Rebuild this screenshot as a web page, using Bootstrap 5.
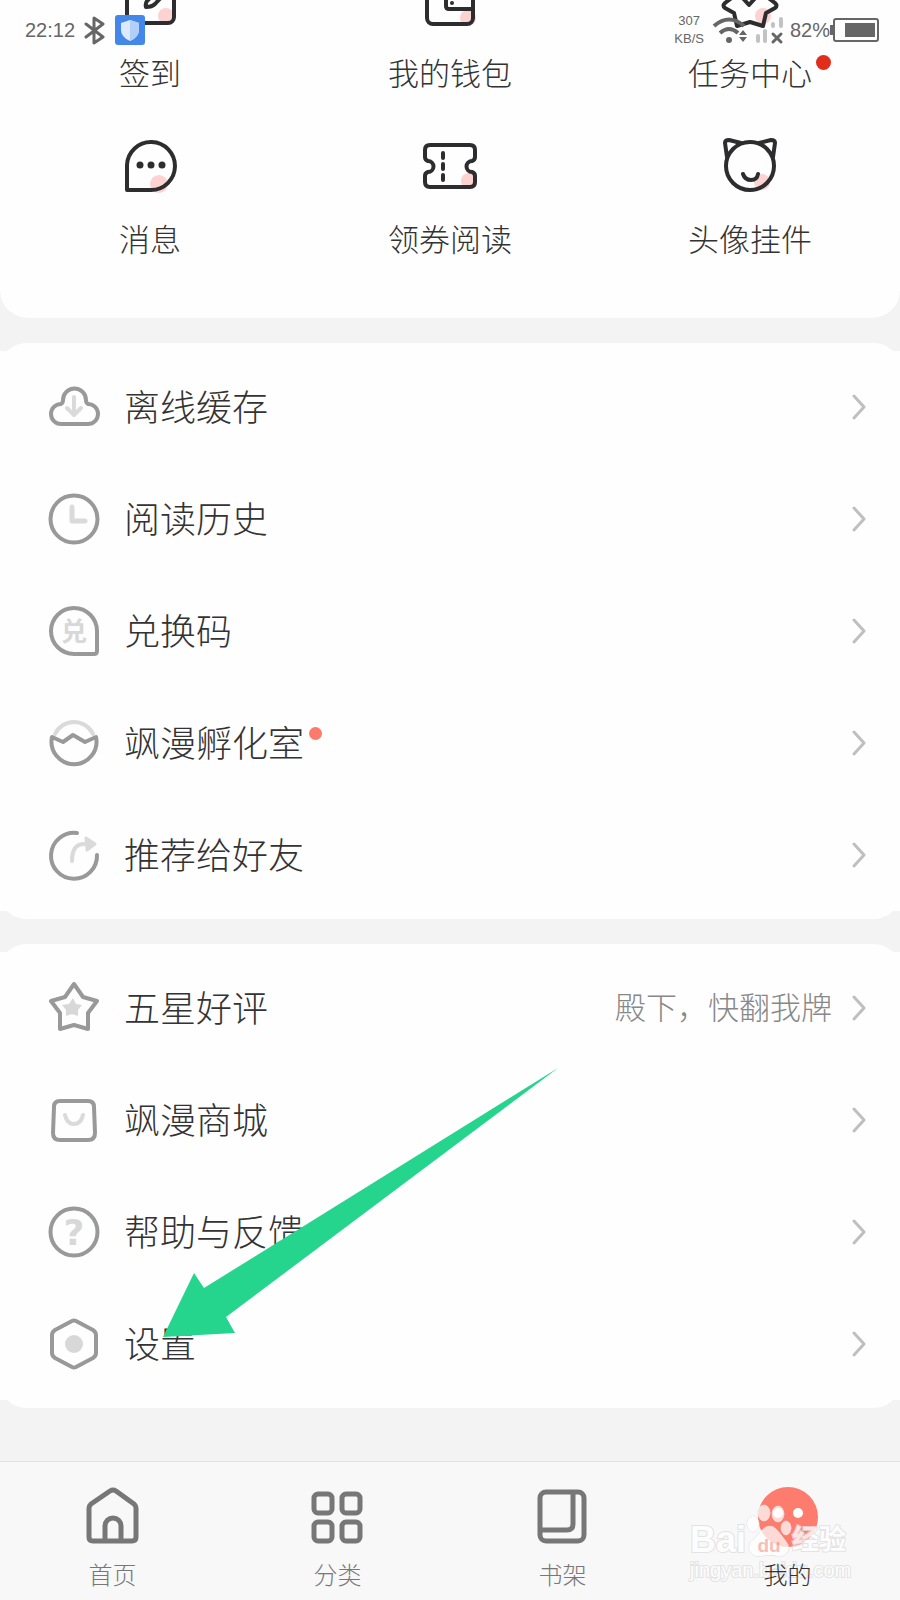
<!DOCTYPE html>
<html lang="zh-CN">
<head>
<meta charset="utf-8">
<meta name="viewport" content="width=device-width, initial-scale=1">
<title>我的</title>
<link href="https://cdn.jsdelivr.net/npm/bootstrap@5.3.0/dist/css/bootstrap.min.css" rel="stylesheet">
<script src="https://cdn.jsdelivr.net/npm/bootstrap@5.3.0/dist/js/bootstrap.bundle.min.js"></script>
<style>
  body { background: #f3f3f3; color: #333; font-family: "Noto Sans CJK SC", sans-serif; font-weight: 300; }
  a { color: inherit; text-decoration: none; }
  svg { flex: none; display: block; fill: none; stroke-linecap: round; stroke-linejoin: round; }

  /* status bar */
  .status { height: 60px; padding: 0 20px 0 25px; color: #666; font-family: "Liberation Sans", sans-serif; font-size: 20px; z-index: 3; }
  .speed { font-size: 13px; line-height: 18px; margin-right: 8px; }

  /* shortcut grid */
  .shortcuts { background: #fefefe; border-radius: 0 0 28px 28px; padding-bottom: 60px; row-gap: 40px; }
  .shortcut { font-size: 31px; line-height: 40px; gap: 22px; }
  .scrolled { height: 30px; overflow: hidden; }
  .ink { stroke: #2d2d2f; stroke-width: 4; }
  .blush { fill: #fcd3d0; stroke: none; }
  .dot { position: absolute; border-radius: 50%; }
  .dot-red { width: 15px; height: 15px; right: -19px; top: 3px; background: #e32d1c; }
  .dot-coral { width: 13px; height: 13px; right: -18px; top: 10px; background: #fd7a6c; }

  /* menu panels: rounded caps round a full-width body */
  .panel { background: #fefefe; border-radius: 26px; padding: 8px 0; margin-top: 25px; }
  .menu-row { background: #fefefe; height: 112px; padding: 0 34px 0 46px; font-size: 36px; line-height: 48px; }
  .menu-row > span { padding-bottom: 4px; }
  .menu-row .menu-icon { stroke: #999; stroke-width: 4; margin-right: 22px; }
  .pale { stroke: #dadada; }
  .pale-fill { fill: #d8d8d8; stroke: none; }
  .hint { color: #888; font-size: 31px; margin-right: 20px; }
  .chevron { stroke: #bfbfbf; stroke-width: 3; }
  .pointer { position: absolute; left: 163px; top: 124px; pointer-events: none; z-index: 2; }

  /* tab bar */
  .tabs { background: #f8f8f8; border-top: 1px solid #e2e2e2; padding: 23px 0 11px; }
  .tab { color: #777; font-size: 24px; line-height: 30px; gap: 10px; }
  .tab svg { stroke: #777; stroke-width: 5; }
  .tab.active { color: #333; }
  .tab.active span { position: relative; z-index: 2; }
  .stamp { position: absolute; right: 50px; top: 42px; width: 160px; color: #fff; opacity: .8; font-family: "Liberation Sans", "Noto Sans CJK SC", sans-serif; font-weight: 700; -webkit-text-stroke: 2px #dedede; paint-order: stroke fill; pointer-events: none; }
  .stamp-name { font-size: 36px; line-height: 36px; }
  .stamp-cn { font-size: 27px; line-height: 36px; }
  .stamp-url { font-size: 20px; line-height: 24px; font-weight: 400; }
  .paw { fill: #fff; fill-opacity: .9; stroke: #d8d8d8; stroke-width: 1; }
  .paw text { fill: #fca399; stroke: none; -webkit-text-stroke: 0; }
</style>
</head>
<body>
<div class="d-flex flex-column min-vh-100 position-relative">

  <header class="status position-absolute top-0 start-0 w-100 d-flex align-items-center">
    <span>22:12</span>
    <svg class="ms-2 me-2" width="24" height="30" stroke="#666" stroke-width="3"><path d="M3 9l17 13-9 6V3l9 6L3 22"/></svg>
    <svg width="30" height="30"><rect width="30" height="30" rx="3" fill="#4387e8"/><path d="M15 5l9 3v7q0 7-9 11-9-4-9-11V8z" fill="#dce9fc"/><path d="M15 5l9 3v7q0 7-9 11z" fill="#b3cff8"/></svg>
    <span class="speed ms-auto text-center">307<br>KB/S</span>
    <svg class="me-1" width="74" height="30" stroke="#666">
      <g stroke-width="4" stroke-linecap="butt"><path d="M2 11q15-13 30 0M8 18q9-8 18 0"/></g>
      <circle cx="17" cy="25" r="3" fill="#666" stroke="none"/>
      <path d="M31 15l4 5h-8zM31 27l4-5h-8z" fill="#666" stroke="none"/>
      <g stroke="#c2c2c2" stroke-width="4"><path d="M46 21v5M53 16v10M61 9v2M69 4v7"/></g>
      <path d="M61 19l8 8M69 19l-8 8" stroke-width="3"/>
    </svg>
    <span>82%</span>
    <svg width="50" height="26"><path d="M0 8h3v10H0z" fill="#666"/><rect x="4" y="2" width="44" height="22" rx="2" stroke="#666" stroke-width="2"/><path d="M15 6h30v14H15z" fill="#666"/></svg>
  </header>

  <main>
    <nav class="shortcuts row g-0 text-center">
      <a href="#" class="shortcut col-4 d-flex flex-column align-items-center">
        <span class="scrolled d-flex align-items-end"><svg class="ink" width="64" height="64" viewBox="0 0 64 64"><circle class="blush" cx="48" cy="50" r="8"/><rect x="9" y="8" width="47" height="49" rx="6"/><path d="M42 22L29 35q-2 3-1 6 6 0 9-3l13-14"/></svg></span>
        <span>签到</span>
      </a>
      <a href="#" class="shortcut col-4 d-flex flex-column align-items-center">
        <span class="scrolled d-flex align-items-end"><svg class="ink" width="64" height="64" viewBox="0 0 64 64"><circle class="blush" cx="50" cy="52" r="8"/><rect x="9" y="10" width="46" height="48" rx="6"/><path d="M55 43H31q-3 0-3-3V30h27"/><circle cx="34" cy="37" r="2" fill="#2d2d2f" stroke="none"/></svg></span>
        <span>我的钱包</span>
      </a>
      <a href="#" class="shortcut col-4 d-flex flex-column align-items-center">
        <span class="scrolled d-flex align-items-end"><svg class="ink" width="64" height="64" viewBox="0 0 64 64"><circle class="blush" cx="45" cy="50" r="8"/><path d="M32 4L40 24 57 37q3 3 0 5l-9 5-3 13-13-4-13 4-3-13-9-5q-3-2 0-5l17-13zM22 29l9 10 9-10"/></svg></span>
        <span class="position-relative">任务中心<i class="dot dot-red"></i></span>
      </a>
      <a href="#" class="shortcut col-4 d-flex flex-column align-items-center">
        <svg class="ink" width="64" height="64" viewBox="0 0 64 64"><circle class="blush" cx="41" cy="52" r="9"/><path d="M9 58V33A24 24 0 1 1 33 58z"/><g fill="#2d2d2f" stroke="none"><circle cx="22" cy="33" r="3.500"/><circle cx="33" cy="33" r="3.500"/><circle cx="44" cy="33" r="3.500"/></g></svg>
        <span>消息</span>
      </a>
      <a href="#" class="shortcut col-4 d-flex flex-column align-items-center">
        <svg class="ink" width="64" height="64" viewBox="0 0 64 64"><circle class="blush" cx="51" cy="49" r="8"/><path d="M12 13h40q5 0 5 5v7q0 3-3 4a5.500 5.500 0 0 0 0 11q3 1 3 4v6q0 5-5 5H12q-5 0-5-5v-6q0-3 3-4a5.500 5.500 0 0 0 0-11q-3-1-3-4v-7q0-5 5-5zM25 21v5M25 32v5M25 43v5"/></svg>
        <span>领券阅读</span>
      </a>
      <a href="#" class="shortcut col-4 d-flex flex-column align-items-center">
        <svg class="ink" width="64" height="64" viewBox="0 0 64 64"><circle class="blush" cx="44" cy="50" r="8"/><circle cx="32" cy="34" r="24"/><path d="M9 25L7 11q0-3 4-3l12 3M55 25l2-14q0-3-4-3l-12 3M25 42q2 6 8 6t7-6"/></svg>
        <span>头像挂件</span>
      </a>
    </nav>

    <section class="panel">
      <a href="#" class="menu-row d-flex align-items-center">
        <svg class="menu-icon" width="56" height="56"><path d="M15 45a10 10 0 0 1 0-20q2-1 2-4a11 11 0 0 1 23 0q0 3 2 4a10 10 0 0 1 0 20z"/><path class="pale" d="M28 18v18M21 29l7 7 7-7"/></svg>
        <span>离线缓存</span>
        <svg class="chevron ms-auto" width="14" height="26"><path d="M2 2l10 11L2 24"/></svg>
      </a>
      <a href="#" class="menu-row d-flex align-items-center">
        <svg class="menu-icon" width="56" height="56"><circle cx="28" cy="28" r="23.500"/><path class="pale" stroke-width="5" d="M26 16v14h13"/></svg>
        <span>阅读历史</span>
        <svg class="chevron ms-auto" width="14" height="26"><path d="M2 2l10 11L2 24"/></svg>
      </a>
      <a href="#" class="menu-row d-flex align-items-center">
        <svg class="menu-icon" width="56" height="56"><path d="M28 5a23 23 0 0 0 0 46h20q3 0 3-3V28A23 23 0 0 0 28 5z"/><text class="pale-fill" x="28" y="38" font-size="26" font-weight="700" text-anchor="middle">兑</text></svg>
        <span>兑换码</span>
        <svg class="chevron ms-auto" width="14" height="26"><path d="M2 2l10 11L2 24"/></svg>
      </a>
      <a href="#" class="menu-row d-flex align-items-center">
        <svg class="menu-icon" width="56" height="56"><path class="pale" d="M9 19a21 21 0 0 1 38 0"/><path d="M6 22l11 5 10-7 12 7 11-5A22.500 22.500 0 1 1 6 22z"/></svg>
        <span class="position-relative">飒漫孵化室<i class="dot dot-coral"></i></span>
        <svg class="chevron ms-auto" width="14" height="26"><path d="M2 2l10 11L2 24"/></svg>
      </a>
      <a href="#" class="menu-row d-flex align-items-center">
        <svg class="menu-icon" width="56" height="56"><path d="M31 6A23 23 0 1 0 51 28"/><path class="pale" d="M26 34q0-17 12-17"/><path class="pale" fill="#dadada" stroke-width="3" d="M40 11l9 6-8 6z"/></svg>
        <span>推荐给好友</span>
        <svg class="chevron ms-auto" width="14" height="26"><path d="M2 2l10 11L2 24"/></svg>
      </a>
    </section>

    <section class="panel position-relative">
      <a href="#" class="menu-row d-flex align-items-center">
        <svg class="menu-icon" width="56" height="56"><path d="M28 4l9 13 14 4-9 12v16l-14-4-14 4V33L5 21l14-4z"/><path class="pale-fill" d="M27 18l3 6 6 1-4 5v6l-6-2-6 2v-6l-4-5 7-1z"/></svg>
        <span>五星好评</span>
        <span class="hint ms-auto">殿下，快翻我牌</span>
        <svg class="chevron" width="14" height="26"><path d="M2 2l10 11L2 24"/></svg>
      </a>
      <a href="#" class="menu-row d-flex align-items-center">
        <svg class="menu-icon" width="56" height="56"><path d="M14 9h28q6 0 6 6l1 26q0 7-7 7H14q-7 0-7-7l1-26q0-6 6-6z"/><path class="pale" d="M19 23q2 9 9 9t9-9"/></svg>
        <span>飒漫商城</span>
        <svg class="chevron ms-auto" width="14" height="26"><path d="M2 2l10 11L2 24"/></svg>
      </a>
      <a href="#" class="menu-row d-flex align-items-center">
        <svg class="menu-icon" width="56" height="56"><circle cx="28" cy="28" r="23.500"/><text class="pale-fill" x="28" y="41" font-family="DejaVu Sans" font-size="36" font-weight="700" text-anchor="middle">?</text></svg>
        <span>帮助与反馈</span>
        <svg class="chevron ms-auto" width="14" height="26"><path d="M2 2l10 11L2 24"/></svg>
      </a>
      <a href="#" class="menu-row d-flex align-items-center">
        <svg class="menu-icon" width="56" height="56"><path d="M26 5q2-1 4 0l17 9q3 2 3 5v18q0 3-3 5l-17 9q-2 1-4 0L9 42q-3-2-3-5V19q0-3 3-5z"/><circle class="pale-fill" cx="28" cy="28" r="9"/></svg>
        <span>设置</span>
        <svg class="chevron ms-auto" width="14" height="26"><path d="M2 2l10 11L2 24"/></svg>
      </a>
      <svg class="pointer" width="396" height="270"><path fill="#26d58d" d="M395 0L41 220 31 205 0 269l72-4-9-16z"/></svg>
    </section>
  </main>

  <nav class="tabs row g-0 mt-auto position-relative">
    <a href="#" class="tab col-3 d-flex flex-column align-items-center">
      <svg width="64" height="64"><path d="M29 6q3-2 6 0l18 13q2 2 2 4v29q0 4-4 4H12q-4 0-4-4V23q0-2 2-4zM24 55V41a8 8 0 0 1 16 0v14"/></svg>
      <span>首页</span>
    </a>
    <a href="#" class="tab col-3 d-flex flex-column align-items-center">
      <svg width="64" height="64"><rect x="8" y="9" width="18" height="19" rx="4"/><rect x="36" y="9" width="18" height="19" rx="4"/><rect x="8" y="37" width="18" height="19" rx="4"/><rect x="36" y="37" width="18" height="19" rx="4"/></svg>
      <span>分类</span>
    </a>
    <a href="#" class="tab col-3 d-flex flex-column align-items-center">
      <svg width="64" height="64"><rect x="9" y="7" width="44" height="49" rx="6"/><path d="M42 8v31q0 6-6 6H10"/></svg>
      <span>书架</span>
    </a>
    <a href="#" class="tab active col-3 d-flex flex-column align-items-center">
      <svg width="64" height="64"><g stroke="none"><circle cx="32" cy="32" r="30" fill="#fe7c6e"/><circle cx="22" cy="28" r="5" fill="#fff"/><circle cx="42" cy="28" r="5" fill="#fff"/></g></svg>
      <span>我的</span>
    </a>
    <div class="stamp">
      <div class="d-flex align-items-end">
        <span class="stamp-name">Bai</span>
        <svg class="paw" width="46" height="54"><ellipse cx="7" cy="20" rx="6" ry="8"/><ellipse cx="18" cy="9" rx="6" ry="8"/><ellipse cx="32" cy="10" rx="6" ry="8"/><ellipse cx="40" cy="24" rx="5" ry="7"/><path d="M15 27q9-10 17 0l7 9q7 9 1 14-4 3-9 2-8-2-15 0-11 2-13-8 0-6 5-9z"/><text x="23" y="48" font-size="19" text-anchor="middle">du</text></svg>
        <span class="stamp-cn">经验</span>
      </div>
      <div class="stamp-url">jingyan.baidu.com</div>
    </div>
  </nav>
</div>
</body>
</html>
